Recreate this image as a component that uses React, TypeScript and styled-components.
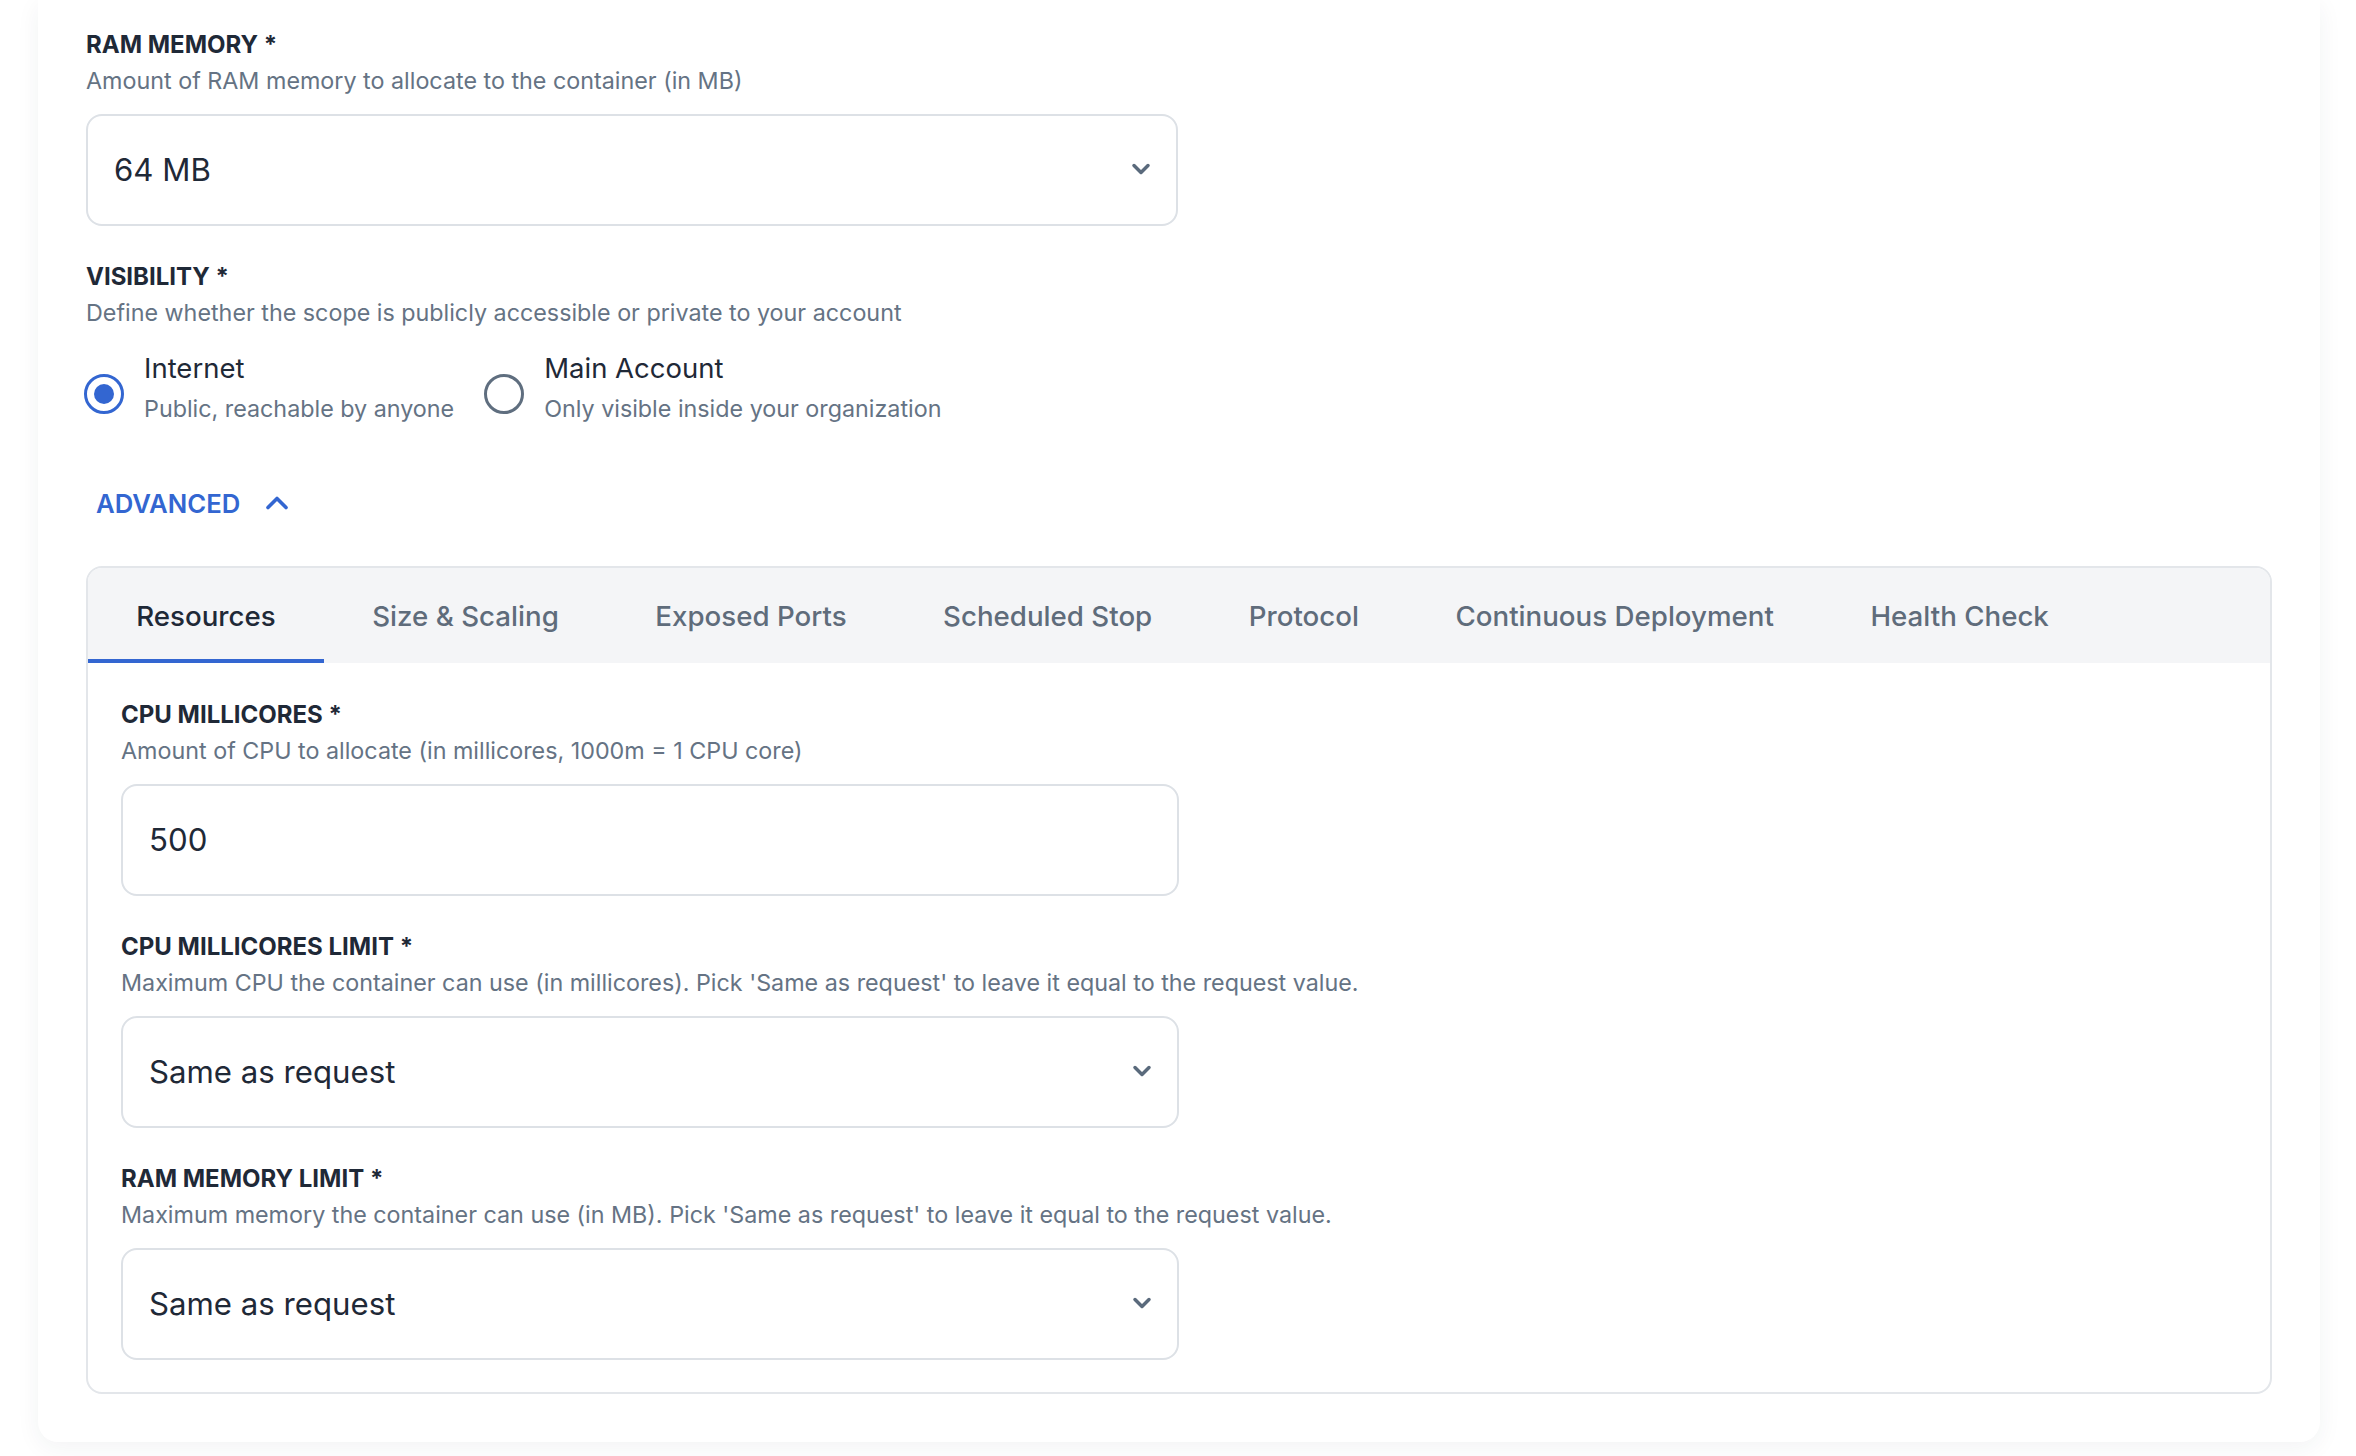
import React, { FC } from "react";
import styled, { createGlobalStyle } from "styled-components";
import { ChevronDown, ChevronUp } from "lucide-react";

const GlobalStyle = createGlobalStyle`
  html, body {
    margin: 0;
    padding: 0;
    height: 100%;
    overflow: hidden;
    background: #ffffff;
    font-family: Inter, "Liberation Sans", sans-serif;
  }
`;

const Page = styled.div`
  width: 2356px;
  height: 1456px;
  padding: 0 36px 14px 38px;
  box-sizing: border-box;
  overflow: hidden;
`;

const Card = styled.div`
  height: 100%;
  box-sizing: border-box;
  background: #fff;
  border-radius: 0 0 20px 20px;
  box-shadow: 0 6px 24px rgba(30, 45, 70, 0.06);
  padding: 26px 48px 0 48px;
`;

const FieldBlock = styled.div`
  width: ${(p: { $wide?: boolean }) => (p.$wide ? "1058px" : "1092px")};
  margin-bottom: 32px;
`;

const Label = styled.div`
  font-size: 24px;
  line-height: 36px;
  padding-top: 1px;
  margin-bottom: -1px;
  font-weight: 700;
  color: #1f2937;
  white-space: nowrap;
`;

const Hint = styled.div`
  font-size: 23.3px;
  line-height: 36px;
  padding-top: 1px;
  margin-bottom: -1px;
  color: #657384;
  white-space: nowrap;
`;

const Control = styled.div`
  margin-top: 16px;
  height: 112px;
  box-sizing: border-box;
  border: 2px solid #dde1e6;
  border-radius: 16px;
  background: #fff;
  display: flex;
  align-items: center;
  justify-content: space-between;
  padding: 0 21px 0 26px;
  font-size: 31.2px;
  color: #1f2937;
  svg {
    color: #5a6a7c;
    margin-bottom: 3px;
  }
`;

const RadioRow = styled.div`
  display: flex;
  gap: 30px;
  margin: 18px 0 0 -2px;
`;

const RadioOption = styled.div`
  display: flex;
  align-items: center;
  gap: 20px;
`;

const RadioDot = styled.span<{ $checked?: boolean }>`
  width: 40px;
  height: 40px;
  margin-top: 11px;
  box-sizing: border-box;
  border-radius: 50%;
  border: 3px solid ${(p) => (p.$checked ? "#3366d1" : "#5f6e7f")};
  display: flex;
  align-items: center;
  justify-content: center;
  &::after {
    content: "";
    width: 20px;
    height: 20px;
    border-radius: 50%;
    background: ${(p) => (p.$checked ? "#3366d1" : "transparent")};
  }
`;

const RadioText = styled.div`
  display: flex;
  flex-direction: column;
`;

const RadioTitle = styled.div`
  font-size: 27.5px;
  line-height: 40px;
  color: #1f2937;
`;

const RadioSub = styled.div`
  font-size: 23.3px;
  line-height: 40px;
  padding-top: 1px;
  margin-bottom: -1px;
  color: #657384;
`;

const AdvancedToggle = styled.div`
  display: flex;
  align-items: center;
  gap: 19px;
  margin: 50px 0 0 10px;
  height: 50px;
  font-size: 25.7px;
  font-weight: 600;
  color: #3366d1;
`;

const TabsCard = styled.div`
  margin-top: 38px;
  width: 2186px;
  box-sizing: border-box;
  border: 2px solid #e3e6ea;
  border-radius: 16px;
  overflow: hidden;
`;

const TabBar = styled.div`
  display: flex;
  height: 95px;
  background: #f4f5f7;
`;

const Tab = styled.div<{ $active?: boolean }>`
  padding: 5px 48.25px 0;
  height: 95px;
  box-sizing: border-box;
  display: flex;
  align-items: center;
  font-size: 27.7px;
  font-weight: 500;
  white-space: nowrap;
  color: ${(p) => (p.$active ? "#1f2937" : "#5f6c7b")};
  border-bottom: 4px solid ${(p) => (p.$active ? "#3366d1" : "transparent")};
`;

const TabPanel = styled.div`
  padding: 33px 0 0 33px;
`;

interface FieldProps {
  label: string;
  hint: string;
  value: string;
  select?: boolean;
  wide?: boolean;
}

const Field: FC<FieldProps> = ({ label, hint, value, select, wide }) => (
  <FieldBlock $wide={wide}>
    <Label>{label}</Label>
    <Hint>{hint}</Hint>
    <Control>
      {value}
      {select && <ChevronDown size={28} strokeWidth={3} />}
    </Control>
  </FieldBlock>
);

const tabs = [
  "Resources",
  "Size & Scaling",
  "Exposed Ports",
  "Scheduled Stop",
  "Protocol",
  "Continuous Deployment",
  "Health Check",
];

const App: FC = () => (
  <Page>
    <GlobalStyle />
    <Card>
      <Field
        label="RAM MEMORY *"
        hint="Amount of RAM memory to allocate to the container (in MB)"
        value="64 MB"
        select
      />
      <Label>VISIBILITY *</Label>
      <Hint>Define whether the scope is publicly accessible or private to your account</Hint>
      <RadioRow>
        <RadioOption>
          <RadioDot $checked />
          <RadioText>
            <RadioTitle>Internet</RadioTitle>
            <RadioSub>Public, reachable by anyone</RadioSub>
          </RadioText>
        </RadioOption>
        <RadioOption>
          <RadioDot />
          <RadioText>
            <RadioTitle>Main Account</RadioTitle>
            <RadioSub>Only visible inside your organization</RadioSub>
          </RadioText>
        </RadioOption>
      </RadioRow>
      <AdvancedToggle>
        ADVANCED
        <ChevronUp size={36} strokeWidth={2.4} />
      </AdvancedToggle>
      <TabsCard>
        <TabBar>
          {tabs.map((t, i) => (
            <Tab key={t} $active={i === 0}>
              {t}
            </Tab>
          ))}
        </TabBar>
        <TabPanel>
          <Field
            wide
            label="CPU MILLICORES *"
            hint="Amount of CPU to allocate (in millicores, 1000m = 1 CPU core)"
            value="500"
          />
          <Field
            wide
            select
            label="CPU MILLICORES LIMIT *"
            hint="Maximum CPU the container can use (in millicores). Pick 'Same as request' to leave it equal to the request value."
            value="Same as request"
          />
          <Field
            wide
            select
            label="RAM MEMORY LIMIT *"
            hint="Maximum memory the container can use (in MB). Pick 'Same as request' to leave it equal to the request value."
            value="Same as request"
          />
        </TabPanel>
      </TabsCard>
    </Card>
  </Page>
);

export default App;
